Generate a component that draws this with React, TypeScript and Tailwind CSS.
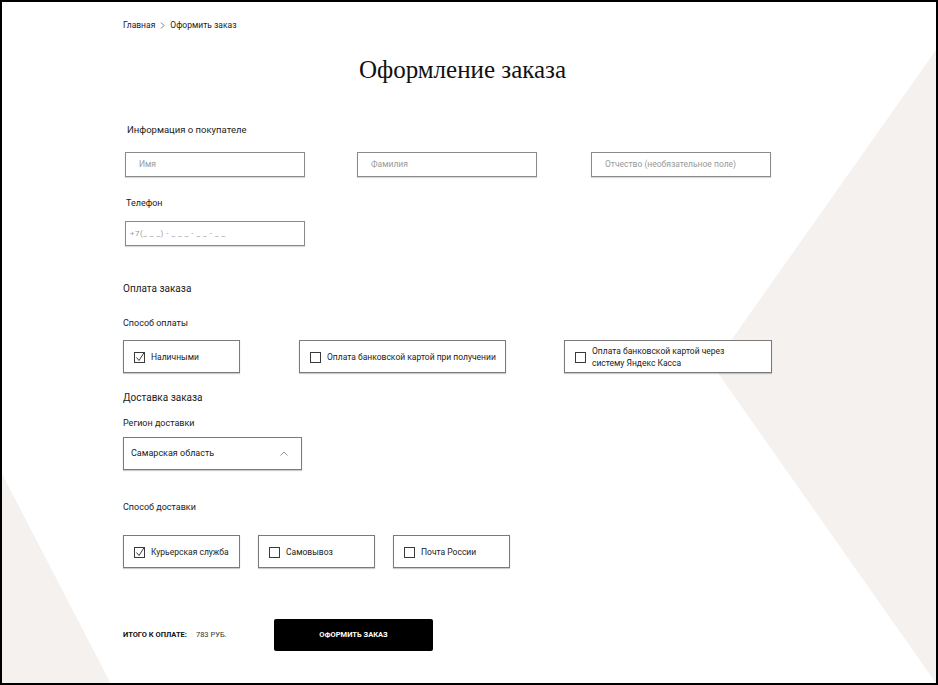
import React from "react";

const CheckBox = ({ checked }: { checked?: boolean }) => (
  <svg width="12" height="12" viewBox="0 0 12 12" className="shrink-0 overflow-visible" aria-hidden="true">
    <rect x="0.5" y="1.5" width="10" height="10" fill="none" stroke="#3a3a3a" strokeWidth="1" />
    {checked && <path d="M2.5 6.5 L5 9.5 L10.5 1" fill="none" stroke="#3a3a3a" strokeWidth="1" />}
  </svg>
);

const TextField = ({ placeholder, className = "" }: { placeholder: string; className?: string }) => (
  <div
    className={`flex h-[25px] w-[180px] items-center border border-[#8a8a8a] bg-white px-[13px] text-[8.5px] text-[#9a9a9a] shadow-[0_1px_1px_rgba(0,0,0,0.15)] ${className}`}
  >
    {placeholder}
  </div>
);

const Option = ({ label, checked, width }: { label: React.ReactNode; checked?: boolean; width: string }) => (
  <div
    className={`flex h-[33px] items-center gap-[5px] whitespace-nowrap border border-[#7a7a7a] bg-white pl-[10px] text-[8.5px] leading-[12px] text-[#222] shadow-[0_1px_1px_rgba(0,0,0,0.2)] ${width}`}
  >
    <CheckBox checked={checked} />
    <span>{label}</span>
  </div>
);

export default function App() {
  return (
    <div className="relative h-[685px] w-[938px] overflow-hidden border-2 border-black bg-white font-['Roboto',sans-serif] text-[#222]">
      {/* background shapes */}
      <svg className="absolute left-[-2px] top-[-2px]" width="938" height="685" aria-hidden="true">
        <polygon points="936,50 713,366 938,686 938,50" fill="#f4f1ef" />
        <polygon points="0,470 112,686 0,686" fill="#f4f1ef" />
      </svg>

      <div className="relative w-[800px] pl-[121px]">
        {/* Breadcrumbs */}
        <div className="flex items-center gap-[5px] pt-[17px] text-[8.5px] leading-[12px] text-[#222]">
          <span>Главная</span>
          <svg width="5" height="7" viewBox="0 0 5 7" aria-hidden="true">
            <path d="M1 0.5 L4 3.5 L1 6.5" fill="none" stroke="#555" strokeWidth="0.8" />
          </svg>
          <span>Оформить заказ</span>
        </div>

        <h1 className="mt-[24px] text-center font-['Liberation_Serif',serif] text-[25px] leading-[30px] text-[#111]">
          Оформление заказа
        </h1>

        {/* Buyer info */}
        <div className="ml-[4px] mt-[39px] text-[9.5px] leading-[12px]">Информация о покупателе</div>
        <div className="ml-[2px] mt-[16px] flex gap-[52px]">
          <TextField placeholder="Имя" />
          <TextField placeholder="Фамилия" />
          <TextField placeholder="Отчество (необязательное поле)" className="ml-[2px]" />
        </div>

        <div className="ml-[3px] mt-[20px] text-[9px] leading-[12px]">Телефон</div>
        <div className="ml-[2px] mt-[12px] flex h-[25px] w-[180px] items-center border border-[#8a8a8a] bg-white px-[4px] text-[8px] tracking-[0.5px] text-[#9a9a9a] shadow-[0_1px_1px_rgba(0,0,0,0.15)]">
          +7(_ _ _) - _ _ _ - _ _ - _ _
        </div>

        {/* Payment */}
        <div className="mt-[37px] text-[10px] leading-[12px]">Оплата заказа</div>
        <div className="mt-[22px] text-[9px] leading-[12px]">Способ оплаты</div>
        <div className="mt-[11px] flex gap-[59px]">
          <Option label="Наличными" checked width="w-[117px]" />
          <Option label="Оплата банковской картой при получении" width="w-[207px]" />
          <Option
            label={
              <>
                Оплата банковской картой через
                <br />
                систему Яндекс Касса
              </>
            }
            width="w-[208px] -ml-[1px]"
          />
        </div>

        {/* Delivery */}
        <div className="mt-[19px] text-[10px] leading-[12px]">Доставка заказа</div>
        <div className="mt-[13px] text-[9px] leading-[12px]">Регион доставки</div>
        <div className="mt-[8px] flex h-[33px] w-[179px] items-center justify-between border border-[#7a7a7a] bg-white pl-[7px] pr-[13px] text-[9px] shadow-[0_1px_1px_rgba(0,0,0,0.2)]">
          <span>Самарская область</span>
          <svg width="8" height="5" viewBox="0 0 8 5" aria-hidden="true">
            <path d="M0.5 4.5 L4 1 L7.5 4.5" fill="none" stroke="#777" strokeWidth="0.8" />
          </svg>
        </div>

        <div className="mt-[31px] text-[9px] leading-[12px]">Способ доставки</div>
        <div className="mt-[22px] flex gap-[18px]">
          <Option label="Курьерская служба" checked width="w-[117px]" />
          <Option label="Самовывоз" width="w-[117px]" />
          <Option label="Почта России" width="w-[117px]" />
        </div>

        {/* Total */}
        <div className="mt-[51px] flex items-center">
          <div className="flex w-[151px] items-center gap-[9px] text-[7.5px]">
            <span className="font-bold text-[#111]">ИТОГО К ОПЛАТЕ:</span>
            <span className="text-[#333]">783 РУБ.</span>
          </div>
          <button className="flex h-[32px] w-[159px] items-center justify-center rounded-[2px] bg-black text-[7.5px] font-bold text-white">
            ОФОРМИТЬ ЗАКАЗ
          </button>
        </div>
      </div>
    </div>
  );
}
